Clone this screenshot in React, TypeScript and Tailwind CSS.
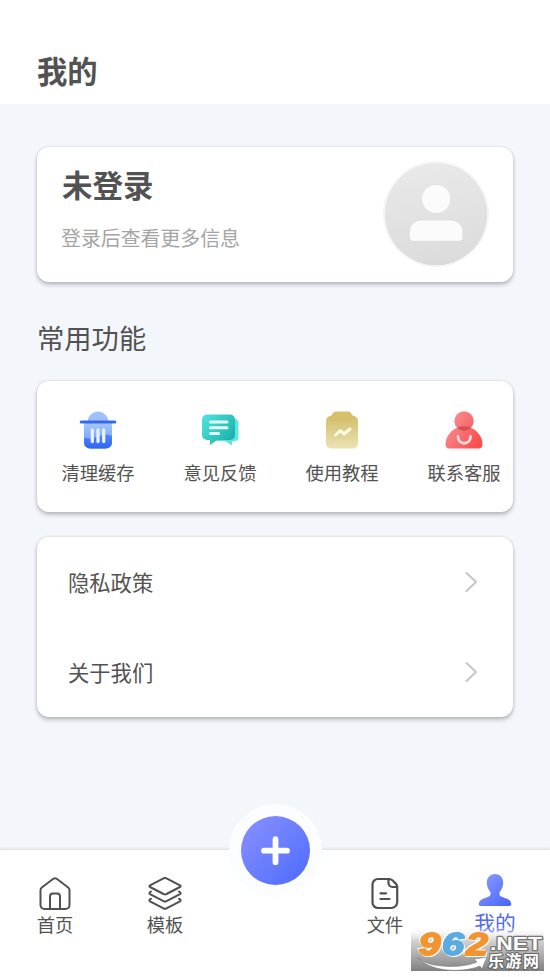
import type { ReactNode } from 'react'

function TrashIcon() {
  return (
    <svg width="38" height="38" viewBox="0 0 38 38" fill="none">
      <defs>
        <linearGradient id="bin" x1="19" y1="10" x2="19" y2="37" gradientUnits="userSpaceOnUse">
          <stop stopColor="#accbfe" />
          <stop offset="1" stopColor="#6296fa" />
        </linearGradient>
        <linearGradient id="wave" x1="19" y1="23" x2="19" y2="37" gradientUnits="userSpaceOnUse">
          <stop stopColor="#5288f8" />
          <stop offset="1" stopColor="#2f66f5" />
        </linearGradient>
      </defs>
      <path d="M8.7 10.5a10.3 10 0 0 1 20.6 0z" fill="#9fc1fb" />
      <path d="M5 11h28v20.5a6 6 0 0 1-6 6H11a6 6 0 0 1-6-6z" fill="url(#bin)" />
      <path d="M5 26.5c5 2 9 1 14-1s10-2.500 14-.5v6.500a6 6 0 0 1-6 6H11a6 6 0 0 1-6-6z" fill="url(#wave)" />
      <path d="M2.200 11h33.600" stroke="#3468ee" strokeWidth="3" strokeLinecap="round" />
      <path d="M13.300 19v11.500M19 19v11.500M24.700 19v11.500" stroke="#e9f1ff" strokeWidth="3.300" strokeLinecap="round" />
    </svg>
  )
}

function FeedbackIcon() {
  return (
    <svg width="38" height="38" viewBox="0 0 38 38" fill="none">
      <defs>
        <linearGradient id="bubble" x1="2" y1="5" x2="34" y2="30" gradientUnits="userSpaceOnUse">
          <stop stopColor="#50e3dc" />
          <stop offset="1" stopColor="#18aca8" />
        </linearGradient>
      </defs>
      <path d="M13 7.500h20a4.500 4.500 0 0 1 4.500 4.500v14a4 4 0 0 1-4 4H31v4.500l-7-4.500H13z" fill="#5ee6df" />
      <path d="M6 3.500h23a5 5 0 0 1 5 5V24a5 5 0 0 1-5 5H16l-7 5v-5H6a5 5 0 0 1-5-5V8.500a5 5 0 0 1 5-5z" fill="url(#bubble)" />
      <path d="M9.500 11h16.500M9.500 16.700h16.500M9.500 22.500h8" stroke="#e5fffc" strokeWidth="3" strokeLinecap="round" />
    </svg>
  )
}

function TutorialIcon() {
  return (
    <svg width="38" height="38" viewBox="0 0 38 38" fill="none">
      <defs>
        <linearGradient id="board" x1="19" y1="5" x2="19" y2="37" gradientUnits="userSpaceOnUse">
          <stop stopColor="#d3bd68" />
          <stop offset="1" stopColor="#ebe2b3" />
        </linearGradient>
      </defs>
      <rect x="3" y="5" width="32" height="32.500" rx="5" fill="url(#board)" />
      <path d="M13 .5h12c2 0 3 1 3.500 2.500 1 .5 1.500 1.200 1.500 2.500a4.500 4.500 0 0 1-4.500 4.500h-13A4.500 4.500 0 0 1 8 5.500C8 4.200 8.500 3.500 9.500 3 10 1.500 11 .5 13 .5z" fill="#d7c06b" />
      <path d="m12.500 24 5-4.500 3.500 3.500 6-5" stroke="#fffbe9" strokeWidth="3" strokeLinecap="round" strokeLinejoin="round" />
    </svg>
  )
}

function ServiceIcon() {
  return (
    <svg width="38" height="38" viewBox="0 0 38 38" fill="none">
      <defs>
        <linearGradient id="service" x1="5" y1="10" x2="34" y2="28" gradientUnits="userSpaceOnUse">
          <stop stopColor="#f58b92" />
          <stop offset="1" stopColor="#fa5150" />
        </linearGradient>
        <clipPath id="head">
          <circle cx="19" cy="10" r="9.700" />
        </clipPath>
      </defs>
      <circle cx="19" cy="10" r="9.700" fill="url(#service)" />
      <path d="M19 15.500c10 0 18.500 8 18.500 18 0 2.500-1.500 4-4 4h-29c-2.500 0-4-1.500-4-4 0-10 8.500-18 18.500-18z" fill="url(#service)" />
      <ellipse cx="19" cy="20" rx="10" ry="4.800" fill="#d84c52" clipPath="url(#head)" />
      <path d="M13 25.500c0 9 12.500 9 12.500 0" stroke="#ffdadc" strokeWidth="2.800" strokeLinecap="round" />
    </svg>
  )
}

function HomeIcon() {
  return (
    <svg width="34" height="34" viewBox="0 0 34 34" fill="none" stroke="#505050" strokeWidth="2" strokeLinejoin="round">
      <path d="M15.300 1.800a3 3 0 0 1 3.400 0l11.500 8.700a3.500 3.500 0 0 1 1.300 2.800V28a4 4 0 0 1-4 4h-21a4 4 0 0 1-4-4V13.300a3.500 3.500 0 0 1 1.300-2.800z" />
      <path d="M12 32V19.500a3 3 0 0 1 3-3h4a3 3 0 0 1 3 3V32" />
    </svg>
  )
}

function LayersIcon() {
  return (
    <svg width="34" height="34" viewBox="0 0 34 34" fill="none" stroke="#505050" strokeWidth="2" strokeLinecap="round" strokeLinejoin="round">
      <path d="M15.500 1.300a3 3 0 0 1 3 0L32 8.300c.8.500.8 1.200 0 1.700l-13.500 7a3 3 0 0 1-3 0L2 10c-.8-.5-.8-1.200 0-1.700z" />
      <path d="M3 14.500l-1 .7c-.8.600-.8 1.400 0 1.900l13.500 7a3 3 0 0 0 3 0l13.500-7c.8-.5.8-1.300 0-1.900l-1-.7" />
      <path d="M3 21.700l-1 .7c-.8.600-.8 1.400 0 1.900l13.500 7a3 3 0 0 0 3 0l13.500-7c.8-.5.8-1.300 0-1.900l-1-.7" />
    </svg>
  )
}

function FileIcon() {
  return (
    <svg width="34" height="34" viewBox="0 0 34 34" fill="none" stroke="#505050" strokeWidth="2.200" strokeLinecap="round" strokeLinejoin="round">
      <path d="M10 2h11.500c1.200 0 2 .4 2.800 1.200l3.700 3.700c.8.800 1.200 1.700 1.200 2.800v15.300a6 6 0 0 1-6 6H10a5.500 5.500 0 0 1-5.500-5.500v-18A5.500 5.500 0 0 1 10 2z" />
      <path d="M20.500 2v4a4 4 0 0 0 4 4h4.500" />
      <path d="M12.500 16.300h5.500M12.500 22h9" />
    </svg>
  )
}

function UserIcon() {
  return (
    <svg width="34" height="34" viewBox="0 0 34 34">
      <defs>
        <linearGradient id="user" x1="5" y1="5" x2="30" y2="31" gradientUnits="userSpaceOnUse">
          <stop stopColor="#8594ff" />
          <stop offset="1" stopColor="#4b68fb" />
        </linearGradient>
      </defs>
      <path d="M17 0c5 0 8.200 3.600 8.200 8.800 0 3.400-1.400 6.600-3.200 8.700-1.100 1.400-.7 4.200 1 5l6.500 2.500c2.500 1 3.700 3 3.700 5 0 1.400-.8 2-2.200 2H3c-1.400 0-2.200-.6-2.200-2 0-2 1.200-4 3.700-5l6.500-2.500c1.700-.8 2.100-3.600 1-5-1.800-2.100-3.200-5.300-3.200-8.700C8.800 3.600 12 0 17 0z" fill="url(#user)" />
    </svg>
  )
}

function Avatar() {
  return (
    <svg width="106" height="106" viewBox="0 0 106 106" className="shrink-0">
      <defs>
        <linearGradient id="avatar" x1="42" y1="1" x2="60" y2="105" gradientUnits="userSpaceOnUse">
          <stop stopColor="#e9e9e9" />
          <stop offset="1" stopColor="#dbdbdb" />
        </linearGradient>
      </defs>
      <circle cx="53" cy="53" r="52.500" fill="#fff" stroke="#ececec" strokeWidth="0.700" />
      <circle cx="53" cy="53" r="51.300" fill="url(#avatar)" />
      <circle cx="53.200" cy="38" r="14" fill="#fbfbfb" />
      <path d="M39 59.500h28c8 0 12.500 5 12.500 12v5c0 2-1 3.200-3.200 3.200H30c-2.200 0-3.200-1.200-3.200-3.200v-5c0-7 4.200-12 12.200-12z" fill="#fbfbfb" />
    </svg>
  )
}

function Chevron() {
  return (
    <svg width="14" height="22" viewBox="0 0 14 22" fill="none">
      <path d="m2.500 2 9.500 9-9.500 9" stroke="#c6c6c6" strokeWidth="2" strokeLinecap="round" strokeLinejoin="round" />
    </svg>
  )
}

function SiteBadge() {
  return (
    <svg width="133" height="43" viewBox="0 0 133 43" className="absolute left-[411px] top-[928px] overflow-visible">
      <defs>
        <linearGradient id="shade" x1="0" y1="0" x2="0" y2="1">
          <stop stopColor="#fff" stopOpacity="0.200" />
          <stop offset="0.300" stopColor="#ccc" stopOpacity="0.900" />
          <stop offset="1" stopColor="#808080" />
        </linearGradient>
        <linearGradient id="swoosh" x1="0" y1="0" x2="1" y2="0">
          <stop stopColor="#aaa" />
          <stop offset="0.300" stopColor="#fff" />
          <stop offset="1" stopColor="#fff" />
        </linearGradient>
      </defs>
      <rect width="133" height="43" fill="url(#shade)" />
      <path d="M6 29c12 11 43 12 60 5l-3-3 13-2-5 12-2-3C50 46 16 43 6 29z" fill="url(#swoosh)" stroke="#777" strokeWidth="0.600" />
      <g fontFamily="'Liberation Sans', sans-serif" fontWeight="700" strokeLinejoin="round" paintOrder="stroke">
        <g fontSize="31" fontStyle="italic" strokeWidth="1.800" className="[filter:drop-shadow(1px_1px_0_#fff)_drop-shadow(-1px_-1px_0_#fff)]">
          <text x="7.500" y="26.500" fill="#f39432" stroke="#f39432" textLength="22" lengthAdjust="spacingAndGlyphs">9</text>
          <text x="31" y="26.500" fill="#5aabdf" stroke="#5aabdf" textLength="22" lengthAdjust="spacingAndGlyphs">6</text>
          <text x="55" y="26.500" fill="#f39432" stroke="#f39432" textLength="22" lengthAdjust="spacingAndGlyphs">2</text>
        </g>
        <text x="79" y="21.500" fontSize="19" fill="#fff" stroke="#777" strokeWidth="2.400" textLength="52" lengthAdjust="spacingAndGlyphs">.NET</text>
      </g>
      <text x="77" y="39" fontFamily="'Noto Sans CJK SC', sans-serif" fontSize="16" fontWeight="700" fill="#fff" stroke="#666" strokeWidth="2" paintOrder="stroke" textLength="51">乐游网</text>
    </svg>
  )
}

const FEATURES = [
  { label: '清理缓存', icon: <TrashIcon /> },
  { label: '意见反馈', icon: <FeedbackIcon /> },
  { label: '使用教程', icon: <TutorialIcon /> },
  { label: '联系客服', icon: <ServiceIcon /> },
]

const LINKS = ['隐私政策', '关于我们']

function Card({ className, children }: { className: string; children: ReactNode }) {
  return (
    <section className={`mx-[37px] rounded-[12px] bg-white shadow-[0_3px_4px_rgba(0,0,0,0.22),0_0_3px_rgba(0,0,0,0.14)] ${className}`}>
      {children}
    </section>
  )
}

function Tab({ label, icon }: { label: string; icon: ReactNode }) {
  return (
    <button className="flex w-[110px] flex-col items-center pt-[27px] text-[18.300px]">
      {icon}
      <span className="mt-px leading-6">{label}</span>
    </button>
  )
}

export default function App() {
  return (
    <div className="relative flex h-[977px] w-[550px] flex-col overflow-hidden bg-[#f3f7fb] font-['Noto_Sans_CJK_SC',sans-serif] text-[#525252]">
      <header className="h-[104px] shrink-0 bg-white pl-[37px] pt-[50px]">
        <h1 className="text-[30.300px] font-bold leading-10">我的</h1>
      </header>

      <main className="flex-1">
        {/* Account */}
        <Card className="mt-[43px] flex h-[135px] justify-between pl-[25px] pr-6 pt-[14px]">
          <div>
            <h2 className="mt-[3px] text-[30.500px] font-bold leading-10">未登录</h2>
            <p className="-ml-px mt-[19px] text-[19.900px] leading-[30px] text-[#a5a5a5]">登录后查看更多信息</p>
          </div>
          <Avatar />
        </Card>

        {/* Features */}
        <h2 className="ml-[37px] mt-[35px] text-[27.300px] leading-10">常用功能</h2>
        <Card className="mt-6 flex h-[131px] pt-[30px]">
          {FEATURES.map((item) => (
            <button key={item.label} className="flex w-[122px] shrink-0 flex-col items-center">
              {item.icon}
              <span className="mt-[11px] text-[18.300px] leading-6">{item.label}</span>
            </button>
          ))}
        </Card>

        {/* Links */}
        <Card className="mt-[25px] h-[180px]">
          {LINKS.map((label) => (
            <a key={label} className="flex h-[90px] items-center justify-between pl-[31px] pr-[35px] text-[21.300px]">
              <span className="pb-px">{label}</span>
              <Chevron />
            </a>
          ))}
        </Card>
      </main>

      <nav className="relative flex h-[127px] shrink-0 bg-white shadow-[0_-1px_3px_rgba(0,0,0,0.12)]">
        <Tab label="首页" icon={<HomeIcon />} />
        <Tab label="模板" icon={<LayersIcon />} />
        <div className="w-[110px]" />
        <Tab label="文件" icon={<FileIcon />} />
        <button className="flex w-[110px] flex-col items-center pt-6 text-[20.700px] text-[#5268f0]">
          <UserIcon />
          <span className="leading-7">我的</span>
        </button>
        <div className="absolute left-[229px] top-[-46px] flex size-[93px] items-center justify-center rounded-full bg-[#fcfdfe]">
          <div className="flex size-[69px] items-center justify-center rounded-full bg-linear-to-br from-[#8b90ff] to-[#4b6aff]">
            <svg width="30" height="30" viewBox="0 0 30 30" stroke="#fff" strokeWidth="5.800" strokeLinecap="round">
              <path d="M14.500 3.200v23M3 14.700h23" />
            </svg>
          </div>
        </div>
      </nav>
      <SiteBadge />
    </div>
  )
}
